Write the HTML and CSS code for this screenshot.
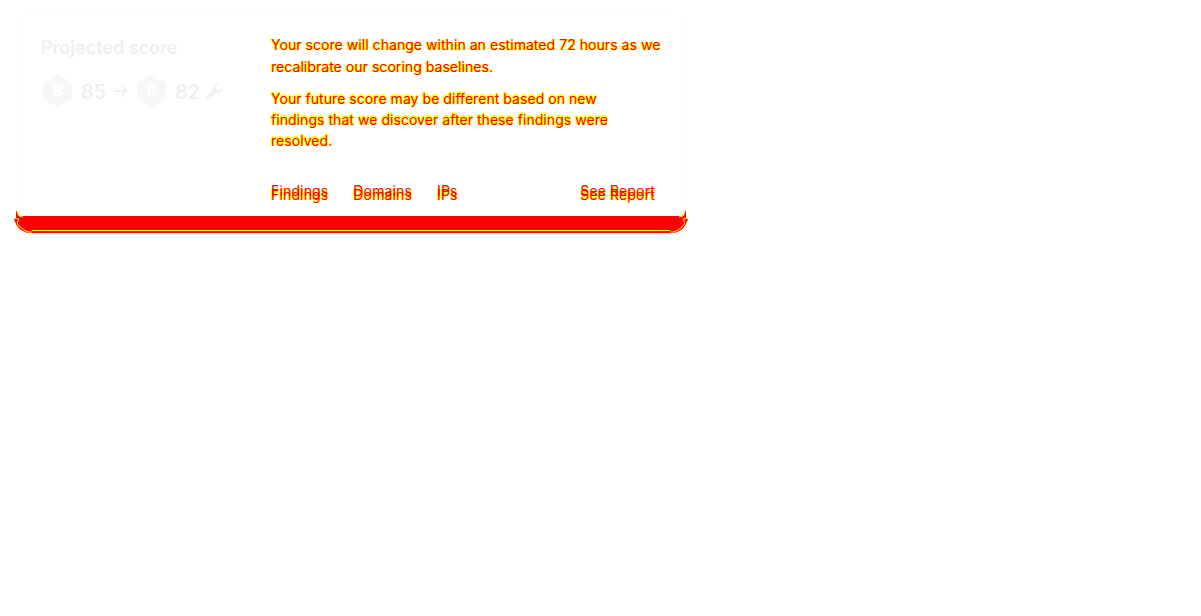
FILE: index.html
```html
<!DOCTYPE html>
<html>
<head>
  <title>Projected score</title>
  <link rel="stylesheet" href="styles.css">
</head>
<body>
  <div class="card">
    <div class="card-body">
      <div class="score-col">
        <h2 class="score-title">Projected score</h2>
        <div class="score-row">
          <span class="hex">
            <svg width="29" height="32" viewBox="0 0 29 32"><polygon points="14.5,0 29,8 29,24 14.5,32 0,24 0,8" fill="#f7f7f7"/></svg>
            <span class="hex-letter">B</span>
          </span>
          <span class="score-num">85</span>
          <svg class="arrow" width="16" height="14" viewBox="0 0 16 14"><path d="M1 7h13M8.5 1.500 14 7l-5.500 5.500" fill="none" stroke="#f1f1f1" stroke-width="2"/></svg>
          <span class="hex">
            <svg width="29" height="32" viewBox="0 0 29 32"><polygon points="14.5,0 29,8 29,24 14.5,32 0,24 0,8" fill="#f7f7f7"/></svg>
            <span class="hex-letter">B</span>
          </span>
          <span class="score-num">82</span>
          <svg class="wrench" width="17" height="17" viewBox="0 0 24 24"><path d="M22.700 6.300a6.500 6.500 0 0 1-8.600 7.900L6 22.300a2.600 2.600 0 0 1-4.300-4.300l8.100-8.100A6.500 6.500 0 0 1 17.700 1.300l-4 4 1 4 4 1z" fill="#f1f1f1"/></svg>
        </div>
      </div>
      <div class="info-col">
        <p class="note note-first">Your score will change within an estimated 72 hours as we recalibrate our scoring baselines.</p>
        <p class="note note-second">Your future score may be different based on new findings that we discover after these findings were resolved.</p>
        <div class="tabs">
          <a class="tab">Findings</a>
          <a class="tab">Domains</a>
          <a class="tab">IPs</a>
          <a class="tab tab-report">See Report</a>
        </div>
      </div>
    </div>
    <div class="card-foot">
      <svg class="flare flare-left" width="18" height="24" viewBox="0 0 18 24"><path d="M2 1 4 6 6 7H18V24H17C11 24 5 21 2 15L0 10 2 9z" fill="#f00"/><path d="M3 2 5 7 9 8M1 9.500 5 10 3 14 6 18 10 21 14 23H18" fill="none" stroke="#ff0" stroke-width="1"/></svg>
      <svg class="flare flare-right" width="18" height="24" viewBox="0 0 18 24"><path d="M2 1 4 6 6 7H18V24H17C11 24 5 21 2 15L0 10 2 9z" fill="#f00"/><path d="M3 2 5 7 9 8M1 9.500 5 10 3 14 6 18 10 21 14 23H18" fill="none" stroke="#ff0" stroke-width="1"/></svg>
    </div>
  </div>
</body>
</html>
```

FILE: styles.css
```css
body {
  margin: 0;
  padding: 16px 0 0 17px;
  background: #fff;
  font-family: Inter, "Liberation Sans", sans-serif;
}

.card {
  width: 668px;
  border-radius: 12px 12px 0 0;
  background: #fff;
  box-shadow: 0 0 8px rgba(0, 0, 0, 0.012), 0 0 0 1px rgba(0, 0, 0, 0.006);
}

.card-body {
  display: flex;
  height: 200px;
}

.score-col {
  width: 254px;
  padding: 21px 0 0 24px;
  box-sizing: border-box;
}

.score-title {
  margin: 0;
  font-size: 18px;
  line-height: 22px;
  font-weight: 600;
  color: #f0f0f0;
}

.score-row {
  display: flex;
  align-items: center;
  margin: 16px 0 0 2px;
  color: #efefef;
}

.hex {
  position: relative;
  display: flex;
  width: 29px;
  height: 32px;
}

.hex-letter {
  position: absolute;
  left: 0;
  right: 0;
  top: 7px;
  text-align: center;
  font-size: 15px;
  line-height: 18px;
  font-weight: 600;
  color: #fff;
}

.score-num {
  margin: 1px 0 0 9px;
  font-size: 20px;
  font-weight: 500;
}

.arrow {
  margin: 0 8px 0 7px;
}

.wrench {
  margin-left: 6px;
}

.info-col {
  width: 395px;
  padding-top: 18px;
  box-sizing: border-box;
  font-size: 14px;
  letter-spacing: 0.05px;
  color: #f00;
}

.note {
  margin: 0;
  line-height: 22px;
  text-shadow: 1px 0 0 #ff0, -1px 0 0 #ff0;
}

.note-second {
  margin-top: 10px;
  width: 365px;
  line-height: 21px;
  text-shadow: 0 -2px 0 #ff0, 1px -1px 0 #ff0, -1px 0 0 #ff0;
}

.tabs {
  display: flex;
  gap: 25px;
  margin-top: 33px;
  line-height: 21px;
  letter-spacing: 0.15px;
  text-shadow: 0 -4px 0 #f00, 1px -2px 0 #ff0, -1px 0 0 #ff0;
}

.tab-report {
  margin-left: auto;
  margin-right: 11px;
}

.card-foot {
  position: relative;
  height: 17px;
  border-radius: 0 0 14px 14px;
  background: linear-gradient(#f00 14px, #ff0 14px, #ff0 15px, #f00 15px);
}

.flare {
  position: absolute;
  bottom: 0;
}

.flare-left {
  left: -3px;
}

.flare-right {
  right: -3px;
  transform: scaleX(-1);
}
```
